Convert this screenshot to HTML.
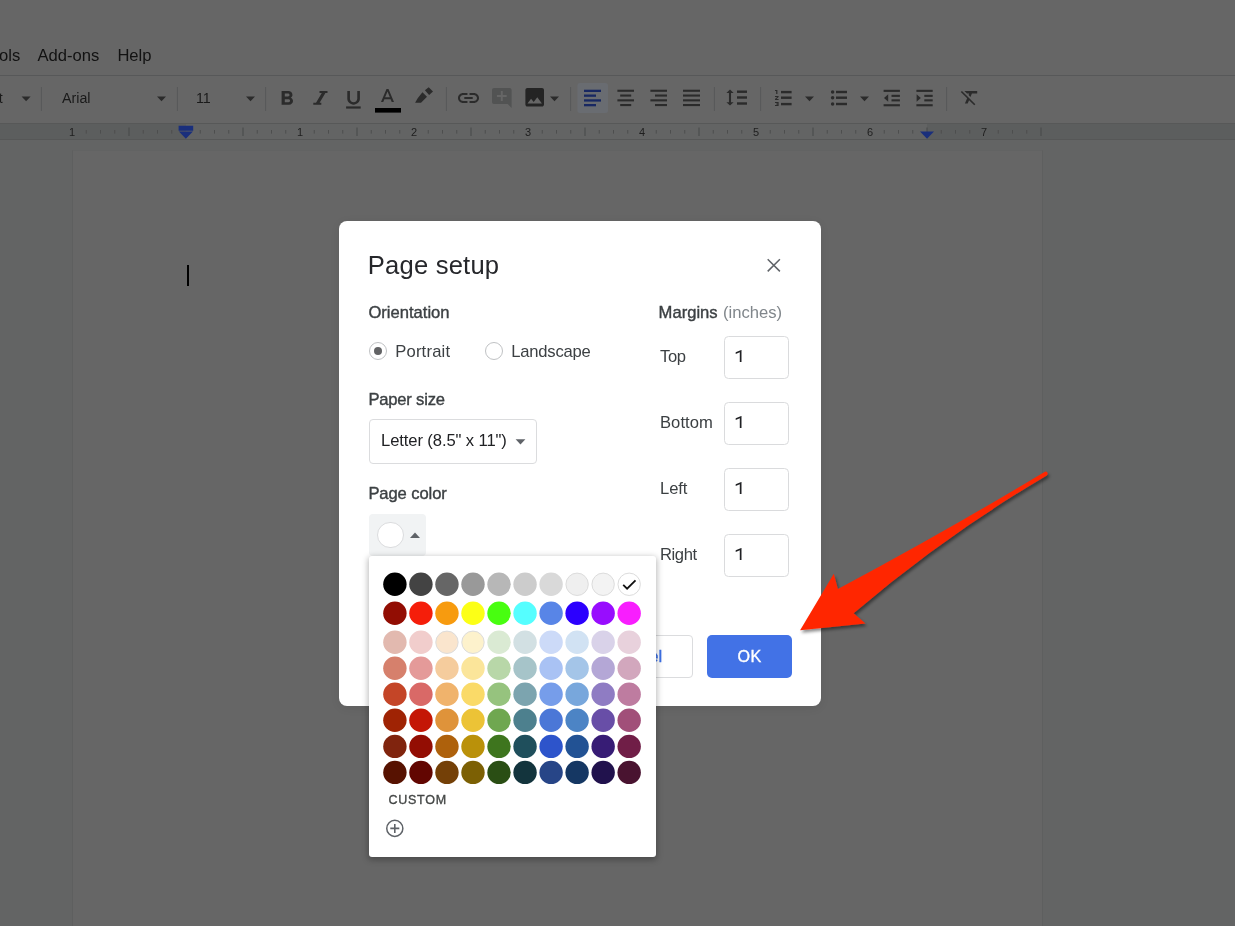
<!DOCTYPE html>
<html><head><meta charset="utf-8"><title>Page setup</title>
<style>
html,body{margin:0;padding:0;overflow:hidden;}
body{width:1235px;height:926px;overflow:hidden;position:relative;background:#636464;font-family:"Liberation Sans", sans-serif;}
svg{position:absolute;left:0;top:0;}
#w{position:absolute;left:0;top:0;width:1235px;height:926px;will-change:transform;overflow:hidden;}
</style></head><body><div id="w">
<div style="position:absolute;left:0px;top:0px;width:1235px;height:123px;background:#666666;"></div>
<div style="position:absolute;left:0px;top:75px;width:1235px;height:1px;background:#575859;"></div>
<div style="position:absolute;left:0px;top:123px;width:1235px;height:17px;background:#5c5e5e;"></div>
<div style="position:absolute;left:186px;top:123px;width:741px;height:17px;background:#636464;"></div>
<div style="position:absolute;left:0px;top:123px;width:1235px;height:1px;background:#575858;"></div>
<div style="position:absolute;left:0px;top:139px;width:1235px;height:1px;background:#565757;"></div>
<div style="position:absolute;left:72px;top:150px;width:971px;height:800px;background:#666666;border:1px solid #5e5f5f;border-top-color:#626363;box-sizing:border-box;"></div>
<div style="position:absolute;left:187px;top:265px;width:2px;height:21px;background:#000;"></div>
<span style="position:absolute;right:1214.7px;top:47.75px;font-size:16.6px;line-height:1;color:#121212;font-weight:400;white-space:pre;">Tools</span>
<span style="position:absolute;left:37.4px;top:47.75px;font-size:16.6px;line-height:1;color:#121212;font-weight:400;white-space:pre;">Add-ons</span>
<span style="position:absolute;left:117.4px;top:47.75px;font-size:16.6px;line-height:1;color:#121212;font-weight:400;white-space:pre;">Help</span>
<span style="position:absolute;left:62px;top:91.04px;font-size:14.25px;line-height:1;color:#1a1a1a;font-weight:400;white-space:pre;">Arial</span>
<span style="position:absolute;right:1232.4px;top:91.04px;font-size:14.25px;line-height:1;color:#1a1a1a;font-weight:400;white-space:pre;">Normal text</span>
<span style="position:absolute;left:196px;top:91.04px;font-size:14.25px;line-height:1;color:#1a1a1a;font-weight:400;white-space:pre;">11</span>
<span style="position:absolute;left:62px;width:20px;text-align:center;top:126.89px;font-size:11px;line-height:1;color:#1e1e1e;">1</span>
<span style="position:absolute;left:290px;width:20px;text-align:center;top:126.89px;font-size:11px;line-height:1;color:#1e1e1e;">1</span>
<span style="position:absolute;left:404px;width:20px;text-align:center;top:126.89px;font-size:11px;line-height:1;color:#1e1e1e;">2</span>
<span style="position:absolute;left:518px;width:20px;text-align:center;top:126.89px;font-size:11px;line-height:1;color:#1e1e1e;">3</span>
<span style="position:absolute;left:632px;width:20px;text-align:center;top:126.89px;font-size:11px;line-height:1;color:#1e1e1e;">4</span>
<span style="position:absolute;left:746px;width:20px;text-align:center;top:126.89px;font-size:11px;line-height:1;color:#1e1e1e;">5</span>
<span style="position:absolute;left:860px;width:20px;text-align:center;top:126.89px;font-size:11px;line-height:1;color:#1e1e1e;">6</span>
<span style="position:absolute;left:974px;width:20px;text-align:center;top:126.89px;font-size:11px;line-height:1;color:#1e1e1e;">7</span>
<svg width="1235" height="926" viewBox="0 0 1235 926"><rect x="40.9" y="87" width="1" height="24" fill="#575859"/><rect x="176.9" y="87" width="1" height="24" fill="#575859"/><rect x="265.1" y="87" width="1" height="24" fill="#575859"/><rect x="445.9" y="87" width="1" height="24" fill="#575859"/><rect x="570.1" y="87" width="1" height="24" fill="#575859"/><rect x="713.9" y="87" width="1" height="24" fill="#575859"/><rect x="760.1" y="87" width="1" height="24" fill="#575859"/><rect x="946.1" y="87" width="1" height="24" fill="#575859"/><path d="M21.6 96.5h9l-4.5 4.8z" fill="#2b2b2b"/><path d="M157 96.5h9l-4.5 4.8z" fill="#2b2b2b"/><path d="M246 96.5h9l-4.5 4.8z" fill="#2b2b2b"/><path d="M550 96.5h9l-4.5 4.8z" fill="#2b2b2b"/><path d="M805 96.5h9l-4.5 4.8z" fill="#2b2b2b"/><path d="M860 96.5h9l-4.5 4.8z" fill="#2b2b2b"/><rect x="85.75" y="130" width="1" height="3.6" fill="#4d4e4e"/><rect x="100.00" y="130" width="1" height="3.6" fill="#4d4e4e"/><rect x="114.25" y="130" width="1" height="3.6" fill="#4d4e4e"/><rect x="128.50" y="127.5" width="1" height="8.5" fill="#474848"/><rect x="142.75" y="130" width="1" height="3.6" fill="#4d4e4e"/><rect x="157.00" y="130" width="1" height="3.6" fill="#4d4e4e"/><rect x="171.25" y="130" width="1" height="3.6" fill="#4d4e4e"/><rect x="199.75" y="130" width="1" height="3.6" fill="#4d4e4e"/><rect x="214.00" y="130" width="1" height="3.6" fill="#4d4e4e"/><rect x="228.25" y="130" width="1" height="3.6" fill="#4d4e4e"/><rect x="242.50" y="127.5" width="1" height="8.5" fill="#474848"/><rect x="256.75" y="130" width="1" height="3.6" fill="#4d4e4e"/><rect x="271.00" y="130" width="1" height="3.6" fill="#4d4e4e"/><rect x="285.25" y="130" width="1" height="3.6" fill="#4d4e4e"/><rect x="313.75" y="130" width="1" height="3.6" fill="#4d4e4e"/><rect x="328.00" y="130" width="1" height="3.6" fill="#4d4e4e"/><rect x="342.25" y="130" width="1" height="3.6" fill="#4d4e4e"/><rect x="356.50" y="127.5" width="1" height="8.5" fill="#474848"/><rect x="370.75" y="130" width="1" height="3.6" fill="#4d4e4e"/><rect x="385.00" y="130" width="1" height="3.6" fill="#4d4e4e"/><rect x="399.25" y="130" width="1" height="3.6" fill="#4d4e4e"/><rect x="427.75" y="130" width="1" height="3.6" fill="#4d4e4e"/><rect x="442.00" y="130" width="1" height="3.6" fill="#4d4e4e"/><rect x="456.25" y="130" width="1" height="3.6" fill="#4d4e4e"/><rect x="470.50" y="127.5" width="1" height="8.5" fill="#474848"/><rect x="484.75" y="130" width="1" height="3.6" fill="#4d4e4e"/><rect x="499.00" y="130" width="1" height="3.6" fill="#4d4e4e"/><rect x="513.25" y="130" width="1" height="3.6" fill="#4d4e4e"/><rect x="541.75" y="130" width="1" height="3.6" fill="#4d4e4e"/><rect x="556.00" y="130" width="1" height="3.6" fill="#4d4e4e"/><rect x="570.25" y="130" width="1" height="3.6" fill="#4d4e4e"/><rect x="584.50" y="127.5" width="1" height="8.5" fill="#474848"/><rect x="598.75" y="130" width="1" height="3.6" fill="#4d4e4e"/><rect x="613.00" y="130" width="1" height="3.6" fill="#4d4e4e"/><rect x="627.25" y="130" width="1" height="3.6" fill="#4d4e4e"/><rect x="655.75" y="130" width="1" height="3.6" fill="#4d4e4e"/><rect x="670.00" y="130" width="1" height="3.6" fill="#4d4e4e"/><rect x="684.25" y="130" width="1" height="3.6" fill="#4d4e4e"/><rect x="698.50" y="127.5" width="1" height="8.5" fill="#474848"/><rect x="712.75" y="130" width="1" height="3.6" fill="#4d4e4e"/><rect x="727.00" y="130" width="1" height="3.6" fill="#4d4e4e"/><rect x="741.25" y="130" width="1" height="3.6" fill="#4d4e4e"/><rect x="769.75" y="130" width="1" height="3.6" fill="#4d4e4e"/><rect x="784.00" y="130" width="1" height="3.6" fill="#4d4e4e"/><rect x="798.25" y="130" width="1" height="3.6" fill="#4d4e4e"/><rect x="812.50" y="127.5" width="1" height="8.5" fill="#474848"/><rect x="826.75" y="130" width="1" height="3.6" fill="#4d4e4e"/><rect x="841.00" y="130" width="1" height="3.6" fill="#4d4e4e"/><rect x="855.25" y="130" width="1" height="3.6" fill="#4d4e4e"/><rect x="883.75" y="130" width="1" height="3.6" fill="#4d4e4e"/><rect x="898.00" y="130" width="1" height="3.6" fill="#4d4e4e"/><rect x="912.25" y="130" width="1" height="3.6" fill="#4d4e4e"/><rect x="926.50" y="127.5" width="1" height="8.5" fill="#474848"/><rect x="940.75" y="130" width="1" height="3.6" fill="#4d4e4e"/><rect x="955.00" y="130" width="1" height="3.6" fill="#4d4e4e"/><rect x="969.25" y="130" width="1" height="3.6" fill="#4d4e4e"/><rect x="997.75" y="130" width="1" height="3.6" fill="#4d4e4e"/><rect x="1012.00" y="130" width="1" height="3.6" fill="#4d4e4e"/><rect x="1026.25" y="130" width="1" height="3.6" fill="#4d4e4e"/><rect x="1040.50" y="127.5" width="1" height="8.5" fill="#474848"/><path d="M178.6 125.7h14.6v5h-14.6z M178.9 131.6h14l-7 7.2z" fill="#1a2f7c"/><path d="M920 131.6h14l-7 7.2z" fill="#1a2f7c"/><path transform="translate(274.177 87.214) scale(1.0605 0.9714)" d="M15.6 10.79c.97-.67 1.65-1.77 1.65-2.79 0-2.26-1.75-4-4-4H7v14h7.04c2.09 0 3.71-1.7 3.71-3.79 0-1.52-.86-2.82-2.15-3.42zM10 6.5h3c.83 0 1.5.67 1.5 1.5s-.67 1.5-1.5 1.5h-3v-3zm3.5 9H10v-3h3.5c.83 0 1.5.67 1.5 1.5s-.67 1.5-1.5 1.5z" fill="#2b2b2b" /><path d="M319.5 91H327.5V92.900H325.400L319.600 102.800H321.300V104.700H313.300V102.800H316L321.800 92.900H319.500Z" fill="#2b2b2b"/><path transform="translate(341.000 88.186) scale(1.0500 0.9714)" d="M12 17c3.31 0 6-2.69 6-6V3h-2.5v8c0 1.93-1.57 3.5-3.5 3.5S8.5 12.93 8.5 11V3H6v8c0 3.31 2.69 6 6 6z" fill="#2b2b2b" /><rect x="346.1" y="106.4" width="14.6" height="2.2" fill="#2b2b2b"/><path transform="translate(375.500 86.214) scale(1.0000 0.9286)" d="M11 3L5.5 17h2.25l1.12-3h6.25l1.12 3h2.25L13 3h-2zm-1.38 9L12 5.67 14.38 12H9.62z" fill="#2b2b2b" /><rect x="375" y="108" width="26" height="4.6" fill="#000000"/><path d="M424.900 90.200L428.700 87.300L433 91.600L429.100 94.900Z M422.400 92.200L427 96.800L421 102.800H415.100L417.700 98.300Z" fill="#2b2b2b"/><path transform="translate(455.900 86.000) scale(1.0500 1.0000)" d="M3.9 12c0-1.71 1.39-3.1 3.1-3.1h4V7H7c-2.76 0-5 2.24-5 5s2.24 5 5 5h4v-1.9H7c-1.71 0-3.1-1.39-3.1-3.1zM8 13h8v-2H8v2zm9-6h-4v1.9h4c1.71 0 3.1 1.39 3.1 3.1s-1.39 3.1-3.1 3.1h-4V17h4c2.76 0 5-2.24 5-5s-2.24-5-5-5z" fill="#2b2b2b" /><path transform="translate(490.040 86.000) scale(0.9800 1.0000)" d="M21.99 4c0-1.1-.89-2-1.99-2H4c-1.1 0-2 .9-2 2v12c0 1.1.9 2 2 2h14l4 4-.01-18zM17 11h-4v4h-2v-4H7V9h4V5h2v4h4v2z" fill="#525353" /><path transform="translate(522.300 84.900) scale(1.0333 1.0333)" d="M21 19V5c0-1.1-.9-2-2-2H5c-1.1 0-2 .9-2 2v14c0 1.1.9 2 2 2h14c1.100 0 2-.9 2-2zM8.5 13.500l2.5 3.010L14.500 12l4.500 6H5l3.500-4.500z" fill="#242424" /><rect x="577.4" y="83" width="30.6" height="30" rx="2.5" fill="#696c71"/><rect x="584" y="89.7" width="17" height="2.3" fill="#182862"/><rect x="584" y="94.5" width="12" height="2.3" fill="#182862"/><rect x="584" y="99.3" width="17" height="2.3" fill="#182862"/><rect x="584" y="104.0" width="12" height="2.3" fill="#182862"/><rect x="617.4" y="89.7" width="16.6" height="2.1" fill="#2b2b2b"/><rect x="620.1999999999999" y="94.5" width="11" height="2.1" fill="#2b2b2b"/><rect x="617.4" y="99.3" width="16.6" height="2.1" fill="#2b2b2b"/><rect x="620.1999999999999" y="104.0" width="11" height="2.1" fill="#2b2b2b"/><rect x="650.4" y="89.7" width="16.6" height="2.1" fill="#2b2b2b"/><rect x="655.0" y="94.5" width="12" height="2.1" fill="#2b2b2b"/><rect x="650.4" y="99.3" width="16.6" height="2.1" fill="#2b2b2b"/><rect x="655.0" y="104.0" width="12" height="2.1" fill="#2b2b2b"/><rect x="683" y="89.7" width="17" height="2.1" fill="#2b2b2b"/><rect x="683" y="94.5" width="17" height="2.1" fill="#2b2b2b"/><rect x="683" y="99.3" width="17" height="2.1" fill="#2b2b2b"/><rect x="683" y="104.0" width="17" height="2.1" fill="#2b2b2b"/><path transform="translate(724.857 86.306) scale(1.0286 0.9412)" d="M6 7h2.5L5 3.5 1.5 7H4v10H1.5L5 20.5 8.5 17H6V7z" fill="#2b2b2b" /><rect x="737" y="90.5" width="10" height="2.4" fill="#2b2b2b"/><rect x="737" y="96.3" width="10" height="2.4" fill="#2b2b2b"/><rect x="737" y="102.3" width="10" height="2.4" fill="#2b2b2b"/><path transform="translate(772.600 86.000) scale(1.2000 1.0000)" d="M2 17h2v.5H3v1h1v.5H2v1h3v-4H2v1zm1-9h1V4H2v1h1v3zm-1 3h1.8L2 13.1v.9h3v-1H3.2L5 10.9V10H2v1z" fill="#2b2b2b" /><rect x="781" y="90.9" width="10.6" height="2.4" fill="#2b2b2b"/><rect x="781" y="96.5" width="10.6" height="2.4" fill="#2b2b2b"/><rect x="781" y="102.9" width="10.6" height="2.4" fill="#2b2b2b"/><circle cx="832.600" cy="92" r="1.750" fill="#2b2b2b"/><rect x="836" y="90.8" width="11" height="2.4" fill="#2b2b2b"/><circle cx="832.600" cy="97.7" r="1.750" fill="#2b2b2b"/><rect x="836" y="96.5" width="11" height="2.4" fill="#2b2b2b"/><circle cx="832.600" cy="104" r="1.750" fill="#2b2b2b"/><rect x="836" y="102.8" width="11" height="2.4" fill="#2b2b2b"/><rect x="883.6" y="89.8" width="16.3" height="2.1" fill="#2b2b2b"/><rect x="883.6" y="104.2" width="16.3" height="2.1" fill="#2b2b2b"/><rect x="891.5" y="94.8" width="8.4" height="2.1" fill="#2b2b2b"/><rect x="891.5" y="99.3" width="8.4" height="2.1" fill="#2b2b2b"/><path d="M888.2 94.2v7.6l-4.200-3.800z" fill="#2b2b2b"/><rect x="916.4" y="89.8" width="16.3" height="2.1" fill="#2b2b2b"/><rect x="916.4" y="104.2" width="16.3" height="2.1" fill="#2b2b2b"/><rect x="924.3" y="94.8" width="8.4" height="2.1" fill="#2b2b2b"/><rect x="924.3" y="99.3" width="8.4" height="2.1" fill="#2b2b2b"/><path d="M916.6 94.2v7.6l4.200-3.800z" fill="#2b2b2b"/><path transform="translate(958.978 86.400) scale(0.9111 0.9000)" d="M3.27 5L2 6.27l6.970 6.970L6.500 19h3l1.570-3.660L16.730 21 18 19.730 3.550 5.270 3.270 5zM6 5v.180L8.820 8h2.400l-.720 1.680 2.100 2.100L14.210 8H20V5H6z" fill="#2b2b2b" /></svg>
<div style="position:absolute;left:339px;top:221px;width:482px;height:485px;box-sizing:border-box;background:#fff;border-radius:8px;box-shadow:0 2px 10px rgba(0,0,0,.08);"></div>
<span style="position:absolute;left:367.8px;top:253.13px;font-size:25.6px;line-height:1;color:#26272b;font-weight:400;white-space:pre;letter-spacing:0.2px;">Page setup</span>
<span style="position:absolute;left:368.4px;top:304.75px;font-size:16.6px;line-height:1;color:#3c4043;font-weight:400;white-space:pre;-webkit-text-stroke:0.38px #3c4043;">Orientation</span>
<span style="position:absolute;left:368.4px;top:391.75px;font-size:16.6px;line-height:1;color:#3c4043;font-weight:400;white-space:pre;-webkit-text-stroke:0.38px #3c4043;letter-spacing:-0.2px;">Paper size</span>
<span style="position:absolute;left:368.4px;top:485.75px;font-size:16.6px;line-height:1;color:#3c4043;font-weight:400;white-space:pre;-webkit-text-stroke:0.38px #3c4043;letter-spacing:-0.1px;">Page color</span>
<span style="position:absolute;left:658.6px;top:304.75px;font-size:16.6px;line-height:1;color:#3c4043;font-weight:400;white-space:pre;-webkit-text-stroke:0.38px #3c4043;">Margins</span>
<span style="position:absolute;left:723px;top:304.75px;font-size:16.6px;line-height:1;color:#80868b;font-weight:400;white-space:pre;">(inches)</span>
<div style="position:absolute;left:369px;top:342px;width:18px;height:18px;box-sizing:border-box;border:1px solid #c0c2c4;border-radius:50%;background:#fff;"></div>
<div style="position:absolute;left:374px;top:347px;width:8px;height:8px;box-sizing:border-box;border-radius:50%;background:#626365;"></div>
<div style="position:absolute;left:485px;top:342px;width:18px;height:18px;box-sizing:border-box;border:1px solid #c0c2c4;border-radius:50%;background:#fff;"></div>
<span style="position:absolute;left:395.2px;top:343.75px;font-size:16.6px;line-height:1;color:#3c4043;font-weight:400;white-space:pre;letter-spacing:0.2px;">Portrait</span>
<span style="position:absolute;left:511.2px;top:343.75px;font-size:16.6px;line-height:1;color:#3c4043;font-weight:400;white-space:pre;letter-spacing:-0.2px;">Landscape</span>
<span style="position:absolute;left:660px;top:348.75px;font-size:16.6px;line-height:1;color:#3c4043;font-weight:400;white-space:pre;letter-spacing:-0.4px;">Top</span>
<div style="position:absolute;left:724.4px;top:336.4px;width:64.4px;height:42.6px;box-sizing:border-box;border:1px solid #dadbdd;border-radius:4.5px;background:#fff;"></div>
<span style="position:absolute;left:660px;top:414.75px;font-size:16.6px;line-height:1;color:#3c4043;font-weight:400;white-space:pre;letter-spacing:0.05px;">Bottom</span>
<div style="position:absolute;left:724.4px;top:402.4px;width:64.4px;height:42.6px;box-sizing:border-box;border:1px solid #dadbdd;border-radius:4.5px;background:#fff;"></div>
<span style="position:absolute;left:660px;top:480.75px;font-size:16.6px;line-height:1;color:#3c4043;font-weight:400;white-space:pre;letter-spacing:-0.1px;">Left</span>
<div style="position:absolute;left:724.4px;top:468.4px;width:64.4px;height:42.6px;box-sizing:border-box;border:1px solid #dadbdd;border-radius:4.5px;background:#fff;"></div>
<span style="position:absolute;left:660px;top:546.75px;font-size:16.6px;line-height:1;color:#3c4043;font-weight:400;white-space:pre;letter-spacing:-0.4px;">Right</span>
<div style="position:absolute;left:724.4px;top:534.4px;width:64.4px;height:42.6px;box-sizing:border-box;border:1px solid #dadbdd;border-radius:4.5px;background:#fff;"></div>
<div style="position:absolute;left:369.4px;top:419.4px;width:167.2px;height:44.6px;box-sizing:border-box;border:1px solid #dbdcde;border-radius:4px;background:#fff;"></div>
<span style="position:absolute;left:381px;top:432.75px;font-size:16.6px;line-height:1;color:#202124;font-weight:400;white-space:pre;letter-spacing:-0.1px;">Letter (8.5&quot; x 11&quot;)</span>
<div style="position:absolute;left:369.4px;top:514px;width:56.6px;height:41.6px;box-sizing:border-box;background:#f1f3f4;border-radius:4px;"></div>
<div style="position:absolute;left:377.4px;top:521.6px;width:26.2px;height:26.2px;box-sizing:border-box;border:1px solid #dbdcde;border-radius:50%;background:#fff;"></div>
<div style="position:absolute;left:584px;top:635px;width:108.6px;height:42.6px;box-sizing:border-box;border:1px solid #dbdcde;border-radius:4px;background:#fff;"></div>
<span style="position:absolute;right:572.8px;top:648.55px;font-size:16.6px;line-height:1;color:#3f72e6;font-weight:400;white-space:pre;-webkit-text-stroke:0.4px #3f72e6;">Cancel</span>
<div style="position:absolute;left:707px;top:635px;width:85px;height:42.6px;box-sizing:border-box;background:#4272e6;border-radius:5px;"></div>
<span style="position:absolute;left:737.6px;top:648.27px;font-size:16.1px;line-height:1;color:#fff;font-weight:400;white-space:pre;-webkit-text-stroke:0.35px #fff;letter-spacing:0.5px;">OK</span>
<div style="position:absolute;left:369px;top:556px;width:287px;height:300.6px;box-sizing:border-box;background:#fff;border-radius:3px;box-shadow:0 2px 6px 1px rgba(0,0,0,.28);"></div>
<svg width="1235" height="926" viewBox="0 0 1235 926"><circle cx="394.90" cy="584.3" r="11.7" fill="#000000"/><circle cx="420.93" cy="584.3" r="11.7" fill="#434343"/><circle cx="446.96" cy="584.3" r="11.7" fill="#666666"/><circle cx="472.99" cy="584.3" r="11.7" fill="#999999"/><circle cx="499.02" cy="584.3" r="11.7" fill="#b7b7b7"/><circle cx="525.05" cy="584.3" r="11.7" fill="#cccccc"/><circle cx="551.08" cy="584.3" r="11.7" fill="#d9d9d9"/><circle cx="577.11" cy="584.3" r="11.2" fill="#efefef" stroke="#dcdcdc" stroke-width="1"/><circle cx="603.14" cy="584.3" r="11.2" fill="#f3f3f3" stroke="#dcdcdc" stroke-width="1"/><circle cx="629.17" cy="584.3" r="11.2" fill="#ffffff" stroke="#dcdcdc" stroke-width="1"/><circle cx="394.90" cy="613.3" r="11.7" fill="#920d03"/><circle cx="420.93" cy="613.3" r="11.7" fill="#f51e0a"/><circle cx="446.96" cy="613.3" r="11.7" fill="#f79b0f"/><circle cx="472.99" cy="613.3" r="11.7" fill="#fcff16"/><circle cx="499.02" cy="613.3" r="11.7" fill="#48fe10"/><circle cx="525.05" cy="613.3" r="11.7" fill="#55feff"/><circle cx="551.08" cy="613.3" r="11.7" fill="#5885e7"/><circle cx="577.11" cy="613.3" r="11.7" fill="#2c00fe"/><circle cx="603.14" cy="613.3" r="11.7" fill="#980dfe"/><circle cx="629.17" cy="613.3" r="11.7" fill="#f81efe"/><circle cx="394.90" cy="642.3" r="11.7" fill="#e2b9af"/><circle cx="420.93" cy="642.3" r="11.7" fill="#f1cdcc"/><circle cx="446.96" cy="642.3" r="11.2" fill="#fae5cd" stroke="#dcdcdc" stroke-width="1"/><circle cx="472.99" cy="642.3" r="11.2" fill="#fdf2cc" stroke="#dcdcdc" stroke-width="1"/><circle cx="499.02" cy="642.3" r="11.7" fill="#daead3"/><circle cx="525.05" cy="642.3" r="11.7" fill="#d2e0e3"/><circle cx="551.08" cy="642.3" r="11.7" fill="#ccdaf8"/><circle cx="577.11" cy="642.3" r="11.7" fill="#d1e2f3"/><circle cx="603.14" cy="642.3" r="11.7" fill="#d9d2e9"/><circle cx="629.17" cy="642.3" r="11.7" fill="#e8d1dc"/><circle cx="394.90" cy="668.3" r="11.7" fill="#d6806c"/><circle cx="420.93" cy="668.3" r="11.7" fill="#e49a99"/><circle cx="446.96" cy="668.3" r="11.7" fill="#f5cc9d"/><circle cx="472.99" cy="668.3" r="11.7" fill="#fbe59a"/><circle cx="499.02" cy="668.3" r="11.7" fill="#b8d7a8"/><circle cx="525.05" cy="668.3" r="11.7" fill="#a6c4c9"/><circle cx="551.08" cy="668.3" r="11.7" fill="#a9c2f4"/><circle cx="577.11" cy="668.3" r="11.7" fill="#a4c5e8"/><circle cx="603.14" cy="668.3" r="11.7" fill="#b4a7d6"/><circle cx="629.17" cy="668.3" r="11.7" fill="#d2a7bd"/><circle cx="394.90" cy="694.3" r="11.7" fill="#c44527"/><circle cx="420.93" cy="694.3" r="11.7" fill="#d96967"/><circle cx="446.96" cy="694.3" r="11.7" fill="#f0b36c"/><circle cx="472.99" cy="694.3" r="11.7" fill="#fada68"/><circle cx="499.02" cy="694.3" r="11.7" fill="#96c37e"/><circle cx="525.05" cy="694.3" r="11.7" fill="#7ca4af"/><circle cx="551.08" cy="694.3" r="11.7" fill="#769dea"/><circle cx="577.11" cy="694.3" r="11.7" fill="#78a7dc"/><circle cx="603.14" cy="694.3" r="11.7" fill="#8f7cc3"/><circle cx="629.17" cy="694.3" r="11.7" fill="#be7ca0"/><circle cx="394.90" cy="720.3" r="11.7" fill="#9f2304"/><circle cx="420.93" cy="720.3" r="11.7" fill="#c41606"/><circle cx="446.96" cy="720.3" r="11.7" fill="#df933a"/><circle cx="472.99" cy="720.3" r="11.7" fill="#ecc336"/><circle cx="499.02" cy="720.3" r="11.7" fill="#6fa750"/><circle cx="525.05" cy="720.3" r="11.7" fill="#4d808e"/><circle cx="551.08" cy="720.3" r="11.7" fill="#4b77d7"/><circle cx="577.11" cy="720.3" r="11.7" fill="#4c84c5"/><circle cx="603.14" cy="720.3" r="11.7" fill="#684ea7"/><circle cx="629.17" cy="720.3" r="11.7" fill="#a14f79"/><circle cx="394.90" cy="746.4" r="11.7" fill="#80240e"/><circle cx="420.93" cy="746.4" r="11.7" fill="#930d03"/><circle cx="446.96" cy="746.4" r="11.7" fill="#ae610c"/><circle cx="472.99" cy="746.4" r="11.7" fill="#ba910a"/><circle cx="499.02" cy="746.4" r="11.7" fill="#3e751e"/><circle cx="525.05" cy="746.4" r="11.7" fill="#1f4f5c"/><circle cx="551.08" cy="746.4" r="11.7" fill="#2d54cb"/><circle cx="577.11" cy="746.4" r="11.7" fill="#225294"/><circle cx="603.14" cy="746.4" r="11.7" fill="#371c75"/><circle cx="629.17" cy="746.4" r="11.7" fill="#701e47"/><circle cx="394.90" cy="772.4" r="11.7" fill="#571201"/><circle cx="420.93" cy="772.4" r="11.7" fill="#620601"/><circle cx="446.96" cy="772.4" r="11.7" fill="#744007"/><circle cx="472.99" cy="772.4" r="11.7" fill="#7c6004"/><circle cx="499.02" cy="772.4" r="11.7" fill="#2a4e14"/><circle cx="525.05" cy="772.4" r="11.7" fill="#13343d"/><circle cx="551.08" cy="772.4" r="11.7" fill="#274587"/><circle cx="577.11" cy="772.4" r="11.7" fill="#153763"/><circle cx="603.14" cy="772.4" r="11.7" fill="#21124d"/><circle cx="629.17" cy="772.4" r="11.7" fill="#491330"/><path d="M623.2 584.8l3.9 3.9 8.4-8.4" fill="none" stroke="#111" stroke-width="1.800"/><circle cx="394.8" cy="828.4" r="8.05" fill="none" stroke="#5f6368" stroke-width="1.5"/><path d="M390.3 828.4h9M394.8 823.9v9" stroke="#5f6368" stroke-width="1.6" fill="none"/><path transform="translate(0 0)" d="M741.5 350.1V362H739.8V352.3L735.7 353.9V352.3L741.2 350.1Z" fill="#202124"/><path transform="translate(0 66)" d="M741.5 350.1V362H739.8V352.3L735.7 353.9V352.3L741.2 350.1Z" fill="#202124"/><path transform="translate(0 132)" d="M741.5 350.1V362H739.8V352.3L735.7 353.9V352.3L741.2 350.1Z" fill="#202124"/><path transform="translate(0 198)" d="M741.5 350.1V362H739.8V352.3L735.7 353.9V352.3L741.2 350.1Z" fill="#202124"/><path d="M767.7 259.2l12.2 12.2M779.9 259.2l-12.2 12.2" stroke="#5f6368" stroke-width="1.5" fill="none"/><path d="M515.6 439.2h9.800l-4.900 5.200z" fill="#5f6368"/><path d="M410 538h10l-5-5.400z" fill="#5f6368"/><defs><filter id="sh" x="-10%" y="-10%" width="120%" height="130%"><feDropShadow dx="1.500" dy="2.500" stdDeviation="1.800" flood-color="#000" flood-opacity="0.45"/></filter></defs><path filter="url(#sh)" d="M800.1 630.3L833.800 573.700L837.900 589Q942.700 533.100 1044.500 472A2 2 0 0 1 1046.700 475.400Q944.200 536 853.600 613.200L865.500 623.500Z" fill="#ff2800"/></svg>
<span style="position:absolute;left:388.4px;top:794.22px;font-size:12.5px;line-height:1;color:#444746;font-weight:400;white-space:pre;-webkit-text-stroke:0.35px #444746;letter-spacing:0.75px;">CUSTOM</span>
</div></body></html>
